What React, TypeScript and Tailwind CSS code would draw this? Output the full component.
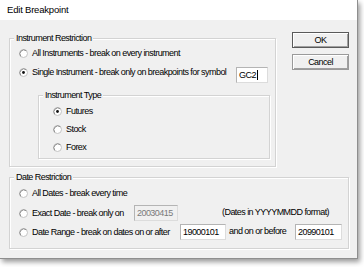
import type { ReactNode } from "react";

const FONT = "font-['Liberation_Sans',Arial,sans-serif] text-[9px] tracking-[-0.55px] text-black";

function Radio({ checked }: { checked?: boolean }) {
  return (
    <svg width="9" height="9" viewBox="0 0 9 9" className="shrink-0">
      <circle cx="4.5" cy="4.5" r="4" fill="#fff" stroke="#c4c4c4" strokeWidth="1" />
      <path d="M1.7 7.3 A4 4 0 0 1 7.3 1.7" fill="none" stroke="#8c8c8c" strokeWidth="1" />
      {checked && <circle cx="4.5" cy="4.5" r="1.4" fill="#111" />}
    </svg>
  );
}

function Option({ label, checked, width }: { label: string; checked?: boolean; width?: string }) {
  return (
    <div className="flex items-center gap-[4px]">
      <Radio checked={checked} />
      <span className={`whitespace-nowrap leading-[12px] ${width ?? ""}`}>{label}</span>
    </div>
  );
}

function Group({ label, className, children }: { label: string; className: string; children: ReactNode }) {
  return (
    <div className={`relative border border-[#d3d3d3] shadow-[inset_1px_1px_0_#fff,1px_1px_0_#fff] ${className}`}>
      <span className="absolute left-[4px] top-[-7px] bg-[#f0f0f0] px-[2px] leading-[12px] whitespace-nowrap">{label}</span>
      {children}
    </div>
  );
}

function Field({ value, width, disabled, caret }: { value: string; width: string; disabled?: boolean; caret?: boolean }) {
  return (
    <div
      className={`flex h-[16px] items-center border border-[#b4b4b4] border-r-[#dcdcdc] border-b-[#dcdcdc] pl-[2px] leading-[12px] ${width} ${
        disabled ? "bg-[#f0f0f0] text-[#7a7a7a]" : "bg-white"
      }`}
    >
      {value}
      {caret && <span className="ml-[1px] h-[10px] w-px bg-black" />}
    </div>
  );
}

function Btn({ label, primary }: { label: string; primary?: boolean }) {
  return (
    <button
      className={`flex h-[16px] w-[57px] items-center justify-center border bg-[#f0f0f0] leading-[12px] shadow-[inset_1px_1px_0_#fff,inset_-1px_-1px_0_#a0a0a0] ${
        primary ? "border-[#5a5a5a]" : "border-[#9a9a9a]"
      }`}
    >
      {label}
    </button>
  );
}

export default function App() {
  return (
    <div className={`h-[267px] w-[364px] overflow-hidden bg-white ${FONT}`}>
      <div className="flex h-[259px] w-[358px] flex-col border-r border-b border-[#8e8e8e] bg-[#f0f0f0] shadow-[2px_3px_5px_rgba(0,0,0,0.4)]">
        {/* title bar */}
        <div className="flex h-[20px] shrink-0 items-center bg-white pl-[7px] text-[9.5px] tracking-[-0.2px]">
          Edit Breakpoint
        </div>

        <div className="flex flex-col pl-[9px]">
          <div className="flex items-start">
            <Group label="Instrument Restriction" className="mt-[18px] h-[129px] w-[267px]">
              <div className="flex flex-col pl-[9px] pr-[5px]">
                <div className="mt-[7px] flex h-[14px] items-center">
                  <Option label="All Instruments - break on every instrument" />
                </div>
                <div className="mt-[5px] flex h-[18px] items-start pr-[2px]">
                  <div className="flex h-[14px] items-center">
                    <Option label="Single Instrument - break only on breakpoints for symbol" checked />
                  </div>
                  <div className="ml-auto mt-[2px]">
                    <Field value="GC2" width="w-[32px]" caret />
                  </div>
                </div>
                <Group label="Instrument Type" className="ml-[19px] mt-[12px] h-[64px]">
                  <div className="flex flex-col pl-[14px]">
                    <div className="mt-[8px] flex h-[14px] items-center">
                      <Option label="Futures" checked />
                    </div>
                    <div className="mt-[4px] flex h-[14px] items-center">
                      <Option label="Stock" />
                    </div>
                    <div className="mt-[4px] flex h-[14px] items-center">
                      <Option label="Forex" />
                    </div>
                  </div>
                </Group>
              </div>
            </Group>

            <div className="ml-[16px] mt-[12px] flex flex-col gap-[6px]">
              <Btn label="OK" primary />
              <Btn label="Cancel" />
            </div>
          </div>

          <Group label="Date Restriction" className="mt-[10px] h-[72px] w-[340px]">
            <div className="flex flex-col pl-[9px]">
              <div className="mt-[7px] flex h-[16px] items-center">
                <Option label="All Dates - break every time" />
              </div>
              <div className="mt-[4px] flex h-[16px] items-center">
                <Option label="Exact Date - break only on" width="w-[102px]" />
                <Field value="20030415" width="w-[44px]" disabled />
                <span className="ml-[44px] whitespace-nowrap">(Dates in YYYYMMDD format)</span>
              </div>
              <div className="mt-[3px] flex h-[16px] items-center">
                <Option label="Date Range - break on dates on or after" width="w-[148px]" />
                <Field value="19000101" width="w-[46px]" />
                <span className="ml-[3px] w-[66px] whitespace-nowrap">and on or before</span>
                <Field value="20990101" width="w-[47px]" />
              </div>
            </div>
          </Group>
        </div>
      </div>
    </div>
  );
}
